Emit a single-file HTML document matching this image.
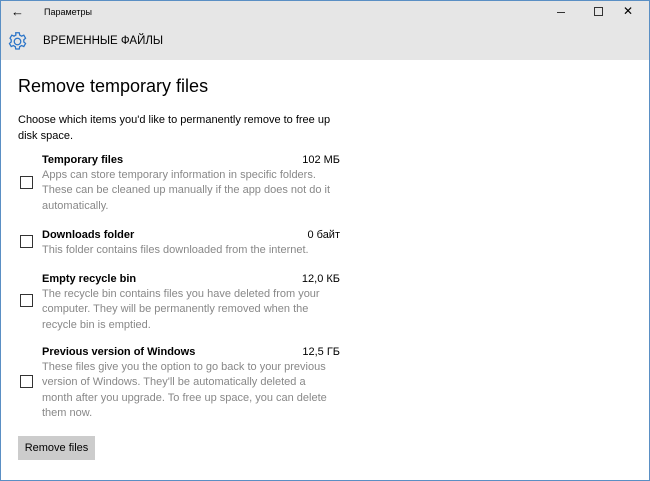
<!DOCTYPE html><html><head><meta charset="utf-8"><style>
body{margin:0;width:650px;height:481px;overflow:hidden;background:#fff;font-family:"Liberation Sans","DejaVu Sans",sans-serif;color:#000;position:relative}
.win{position:absolute;left:0;top:0;width:648px;height:479px;border:1px solid #5a8fc4}
.top{position:absolute;left:1px;top:1px;width:648px;height:59px;background:#e6e6e6}
.abs{position:absolute;white-space:nowrap}
.cb{position:absolute;left:20px;width:11px;height:11px;border:1.5px solid #333}
.h{font-weight:bold;font-size:11px}
.d{font-size:11px;color:#888;line-height:15.3px}
.sz{font-size:11px;right:310px}
</style></head><body>
<div class="top"></div>
<div class="win"></div>
<div class="abs" style="left:11px;top:4px;font-size:13px">&#8592;</div>
<div class="abs" style="left:44px;top:7px;font-size:9px">Параметры</div>
<div class="abs" style="left:557px;top:12px;width:8px;height:1px;background:#333"></div>
<div class="abs" style="left:594px;top:7px;width:7px;height:7px;border:1px solid #333"></div>
<div class="abs" style="left:623px;top:4px;font-size:12px">✕</div>
<svg class="abs" style="left:7px;top:31px" width="21" height="21" viewBox="0 0 18 18"><g fill="none" stroke="#2a74c8" stroke-width="1.1"><circle cx="9" cy="9" r="2.8"/><path d="M7.5 1.5h3l.4 2 1.6.9 1.9-.8 1.5 2.6-1.5 1.3v1.9l1.5 1.3-1.5 2.6-1.9-.8-1.6.9-.4 2h-3l-.4-2-1.6-.9-1.9.8-1.5-2.6 1.5-1.3V7.5L2.6 6.2l1.5-2.6 1.9.8 1.6-.9z"/></g></svg>
<div class="abs" style="left:43px;top:35px;font-size:11.5px">ВРЕМЕННЫЕ ФАЙЛЫ</div>
<div class="abs" style="left:18px;top:76px;font-size:18px">Remove temporary files</div>
<div class="abs" style="left:18px;top:112px;font-size:11px;line-height:16px">Choose which items you'd like to permanently remove to free up<br>disk space.</div>

<div class="abs h" style="left:42px;top:154px">Temporary files</div><div class="abs sz" style="top:154px">102 МБ</div>
<div class="cb" style="top:176px"></div>
<div class="abs d" style="left:42px;top:168px">Apps can store temporary information in specific folders.<br>These can be cleaned up manually if the app does not do it<br>automatically.</div>

<div class="abs h" style="left:42px;top:229px">Downloads folder</div><div class="abs sz" style="top:229px">0 байт</div>
<div class="cb" style="top:235px"></div>
<div class="abs d" style="left:42px;top:243px">This folder contains files downloaded from the internet.</div>

<div class="abs h" style="left:42px;top:273px">Empty recycle bin</div><div class="abs sz" style="top:273px">12,0 КБ</div>
<div class="cb" style="top:294px"></div>
<div class="abs d" style="left:42px;top:287px">The recycle bin contains files you have deleted from your<br>computer. They will be permanently removed when the<br>recycle bin is emptied.</div>

<div class="abs h" style="left:42px;top:346px">Previous version of Windows</div><div class="abs sz" style="top:346px">12,5 ГБ</div>
<div class="cb" style="top:375px"></div>
<div class="abs d" style="left:42px;top:360px">These files give you the option to go back to your previous<br>version of Windows. They'll be automatically deleted a<br>month after you upgrade. To free up space, you can delete<br>them now.</div>

<div class="abs" style="left:18px;top:436px;width:77px;height:24px;background:#ccc;font-size:11px;line-height:24px;text-align:center">Remove files</div>
</body></html>
